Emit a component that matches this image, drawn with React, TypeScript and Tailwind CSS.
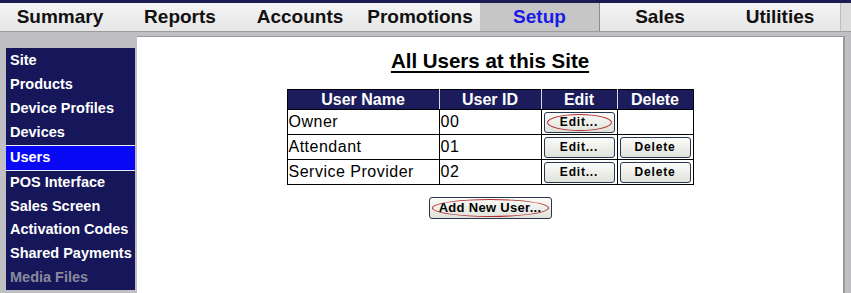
import React from 'react';

const tabs = ['Summary', 'Reports', 'Accounts', 'Promotions', 'Setup', 'Sales', 'Utilities'];

const menu = [
  'Site',
  'Products',
  'Device Profiles',
  'Devices',
  'Users',
  'POS Interface',
  'Sales Screen',
  'Activation Codes',
  'Shared Payments',
  'Media Files',
];

const users = [
  { name: 'Owner', id: '00', canDelete: false, focus: true },
  { name: 'Attendant', id: '01', canDelete: true, focus: false },
  { name: 'Service Provider', id: '02', canDelete: true, focus: false },
];

function FormButton({ label, focus, wide }: { label: string; focus?: boolean; wide?: boolean }) {
  return (
    <button
      className={`relative flex items-center justify-center rounded-[3px] border border-[#2a3550] bg-gradient-to-b from-[#fbfbf9] to-[#e2e2dc] font-bold text-black ${
        wide ? 'h-[22px] w-[123px] text-[13px] tracking-[0.3px]' : 'h-[21px] w-[71px] text-[12px] tracking-[0.8px]'
      }`}
    >
      {label}
      {/* focus ellipse */}
      {focus && (
        <span className="pointer-events-none absolute inset-x-[2px] inset-y-[1px] rounded-[50%] border border-[#b02a2a]" />
      )}
    </button>
  );
}

export default function App() {
  return (
    <div className="flex h-[293px] w-[851px] flex-col overflow-hidden bg-[#c0c0c4] font-['Liberation_Sans',Arial,sans-serif]">
      {/* Top strip */}
      <div className="h-[3px] bg-[#1c1c52]" />

      {/* Tab bar */}
      <div className="flex h-[29px] border-b border-[#9c9c9c] bg-gradient-to-b from-[#f4f4f4] to-[#e6e6e6]">
        {tabs.map((t) => (
          <div
            key={t}
            className={`flex w-[120px] items-center justify-center text-[19px] font-bold ${
              t === 'Setup' ? 'border-r border-[#8c8c8c] bg-[#c6c6c6] text-[#1a1ae6]' : 'text-[#111]'
            }`}
          >
            {t}
          </div>
        ))}
        <div className="flex-1 border-l border-[#bdbdbd] bg-[#dcdcdc]" />
      </div>

      <div className="flex flex-1">
        {/* Sidebar */}
        <div className="w-[137px] pl-[6px] pr-[2px] pt-[16px]">
          <div className="flex h-[242px] flex-col bg-[#16165a] pt-[1px]">
            {menu.map((m) => (
              <div
                key={m}
                className={`flex items-center pl-[4px] text-[14.5px] font-bold ${
                  m === 'Users'
                    ? 'h-[26px] border-y border-[#e8e8f0] bg-[#0808f4] text-white'
                    : m === 'Media Files'
                      ? 'h-[24px] text-[#8a8a9c]'
                      : 'h-[24px] text-white'
                }`}
              >
                {m}
              </div>
            ))}
          </div>
        </div>

        {/* Content panel */}
        <div className="mt-[4px] flex w-[708px] flex-col items-center border-r-2 border-t border-[#9a9a9e] bg-white pt-[12px]">
          <h1 className="text-[20.5px] font-bold leading-[24px] text-black underline decoration-[2px] underline-offset-[3px]">
            All Users at this Site
          </h1>

          <table className="mt-[16px] border-collapse text-[16px] text-black">
            <thead>
              <tr className="h-[20px] bg-[#1c1c5c] text-white">
                <th className="w-[152px] border border-black border-r-[#d8d8e0] p-0 font-bold leading-[18px]">User Name</th>
                <th className="w-[102px] border border-black border-r-[#d8d8e0] p-0 font-bold leading-[18px]">User ID</th>
                <th className="w-[76px] border border-black border-r-[#d8d8e0] p-0 font-bold leading-[18px]">Edit</th>
                <th className="w-[76px] border border-black p-0 font-bold leading-[18px]">Delete</th>
              </tr>
            </thead>
            <tbody>
              {users.map((u) => (
                <tr key={u.id} className="h-[25px]">
                  <td className="border border-black pl-[1px] leading-[22px] tracking-[0.5px]">{u.name}</td>
                  <td className="border border-black pl-[1px] leading-[22px] tracking-[0.5px]">{u.id}</td>
                  <td className="border border-black p-0">
                    <div className="flex justify-center">
                      <FormButton label="Edit..." focus={u.focus} />
                    </div>
                  </td>
                  <td className="border border-black p-0">
                    {u.canDelete && (
                      <div className="flex justify-center">
                        <FormButton label="Delete" />
                      </div>
                    )}
                  </td>
                </tr>
              ))}
            </tbody>
          </table>

          <div className="mt-[12px]">
            <FormButton label="Add New User..." focus wide />
          </div>
        </div>
      </div>
    </div>
  );
}
